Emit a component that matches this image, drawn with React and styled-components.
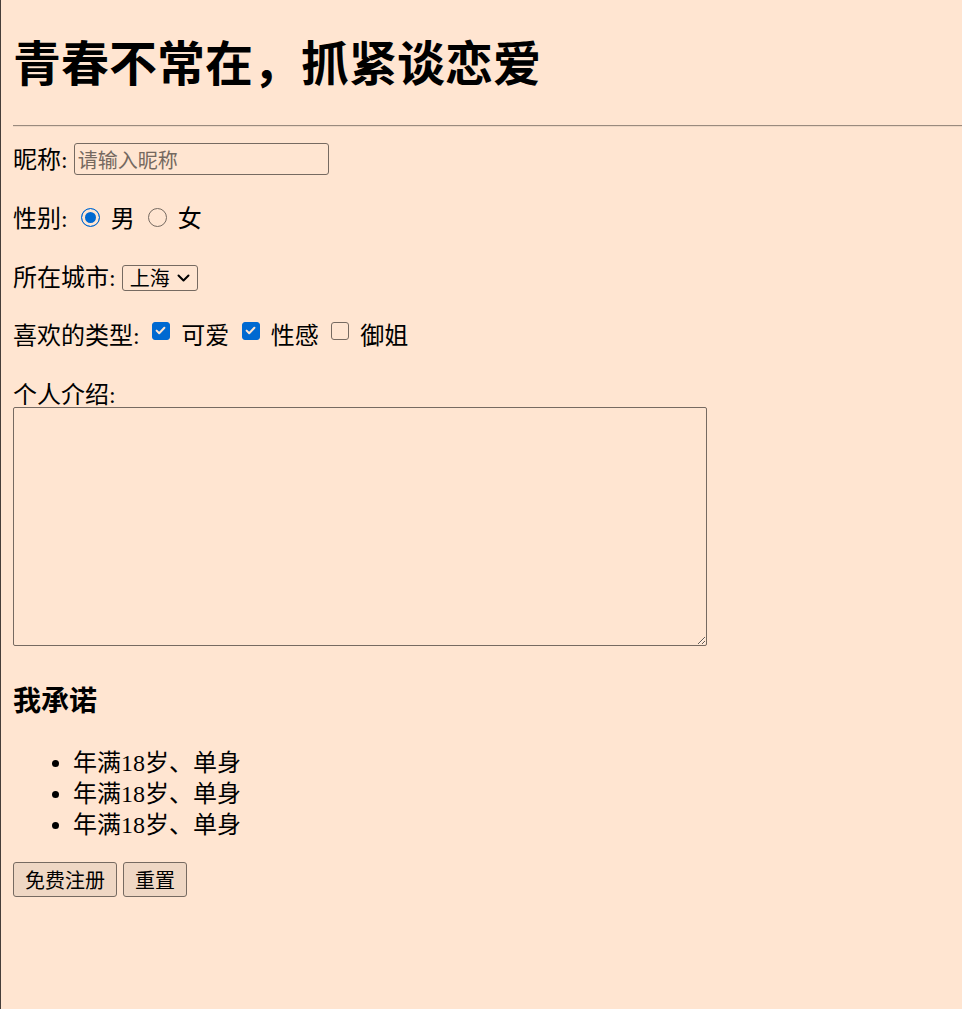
import styled, { createGlobalStyle } from "styled-components";

const GlobalStyle = createGlobalStyle`
  html {
    background: #ffe5d1;
  }
  body {
    margin: 0;
    min-height: 100vh;
    border-left: 1px solid #463e3a;
    font-family: "Liberation Serif", "Noto Sans CJK SC", serif;
    font-size: 24px;
    line-height: 31px;
    color: #000;
  }
`;

const Page = styled.div`
  padding: 35px 0 40px 12px;
`;

const Title = styled.h1`
  margin: 0;
  font-size: 48px;
  line-height: 60px;
  font-weight: 700;
`;

const Divider = styled.hr`
  margin: 30px 0 0;
  height: 0;
  border: 0;
  border-top: 1px solid #9a8a7e;
  border-bottom: 1px solid #eed6c3;
`;

const Field = styled.div`
  margin-top: ${(p) => p.$top}px;
  white-space: nowrap;
`;

const TextInput = styled.input`
  box-sizing: border-box;
  width: 255px;
  height: 32px;
  margin: 0 0 0 6px;
  padding: 0 3px;
  border: 1px solid #766a61;
  border-radius: 3px;
  background: transparent;
  font-family: "Noto Sans CJK SC", sans-serif;
  font-size: 20px;
  color: #000;
  &::placeholder {
    color: #756960;
  }
`;

const Radio = styled.span`
  display: inline-block;
  box-sizing: border-box;
  width: 19px;
  height: 19px;
  margin: 0 10.5px 0 13.5px;
  border-radius: 50%;
  border: 1.5px solid ${(p) => (p.$checked ? "#0069d1" : "#766a61")};
  background: ${(p) => (p.$checked ? "#0069d1" : "transparent")};
  box-shadow: ${(p) => (p.$checked ? "inset 0 0 0 3px #ffe5d1" : "none")};
`;

const Box = styled.span`
  display: inline-block;
  box-sizing: border-box;
  width: 18px;
  height: 18px;
  margin: 0 11px 4px 12.5px;
  border-radius: 3px;
  border: 1.5px solid ${(p) => (p.$checked ? "#0069d1" : "#766a61")};
  background: ${(p) => (p.$checked ? "#0069d1" : "transparent")};
  svg {
    display: block;
  }
`;

const SelectWrap = styled.span`
  position: relative;
  display: inline-block;
  margin-left: 6px;
  svg {
    position: absolute;
    right: 8px;
    top: 50%;
    margin-top: -4px;
    pointer-events: none;
  }
`;

const Select = styled.select`
  appearance: none;
  box-sizing: border-box;
  width: 76px;
  height: 26px;
  margin: 0;
  padding: 0 0 0 7px;
  border: 1px solid #766a61;
  border-radius: 3px;
  background: transparent;
  font-family: "Noto Sans CJK SC", sans-serif;
  font-size: 20px;
  line-height: 24px;
  color: #000;
`;

const IntroLabel = styled.div`
  margin-top: 32px;
  line-height: 23px;
`;

const Intro = styled.textarea`
  display: block;
  box-sizing: border-box;
  width: 694px;
  height: 239px;
  margin: 0;
  border: 1px solid #766a61;
  border-radius: 2px;
  background: transparent;
  font-family: "Liberation Mono", monospace;
  font-size: 20px;
`;

const Promise = styled.h3`
  margin: 39px 0 0;
  font-size: 28px;
  line-height: 34px;
  font-weight: 700;
`;

const Terms = styled.ul`
  margin: 29px 0 0;
  padding-left: 60px;
  list-style: disc;
`;

const Actions = styled.div`
  display: flex;
  gap: 6px;
  margin-top: 21px;
`;

const Button = styled.button`
  box-sizing: border-box;
  height: 35px;
  padding: 0 11px;
  border: 1px solid #766a61;
  border-radius: 3px;
  background: #efd7c4;
  font-family: "Noto Sans CJK SC", sans-serif;
  font-size: 20px;
  line-height: 33px;
  color: #000;
`;

const Check = ({ checked }) => (
  <Box $checked={checked}>
    {checked && (
      <svg width="15" height="15" viewBox="0 0 15 15">
        <path
          d="M3.6 7.6l2.6 2.6 5.2-5.4"
          fill="none"
          stroke="#ffe5d1"
          strokeWidth="2"
          strokeLinecap="round"
          strokeLinejoin="round"
        />
      </svg>
    )}
  </Box>
);

const terms = ["年满18岁、单身", "年满18岁、单身", "年满18岁、单身"];

export default function App() {
  return (
    <>
      <GlobalStyle />
      <Page>
        <Title>青春不常在，抓紧谈恋爱</Title>
        <Divider />
        <Field $top={16}>
          昵称:
          <TextInput type="text" placeholder="请输入昵称" />
        </Field>
        <Field $top={28}>
          性别:
          <Radio $checked />男
          <Radio />女
        </Field>
        <Field $top={28}>
          所在城市:
          <SelectWrap>
            <Select defaultValue="上海">
              <option>北京</option>
              <option>上海</option>
              <option>广州</option>
            </Select>
            <svg width="13" height="8" viewBox="0 0 13 8">
              <path
                d="M1.5 1.5l5 5 5-5"
                fill="none"
                stroke="#000"
                strokeWidth="2"
                strokeLinecap="round"
                strokeLinejoin="round"
              />
            </svg>
          </SelectWrap>
        </Field>
        <Field $top={27}>
          喜欢的类型:
          <Check checked />可爱
          <Check checked />性感
          <Check />御姐
        </Field>
        <IntroLabel>个人介绍:</IntroLabel>
        <Intro />
        <Promise>我承诺</Promise>
        <Terms>
          {terms.map((t, i) => (
            <li key={i}>{t}</li>
          ))}
        </Terms>
        <Actions>
          <Button type="submit">免费注册</Button>
          <Button type="reset">重置</Button>
        </Actions>
      </Page>
    </>
  );
}
